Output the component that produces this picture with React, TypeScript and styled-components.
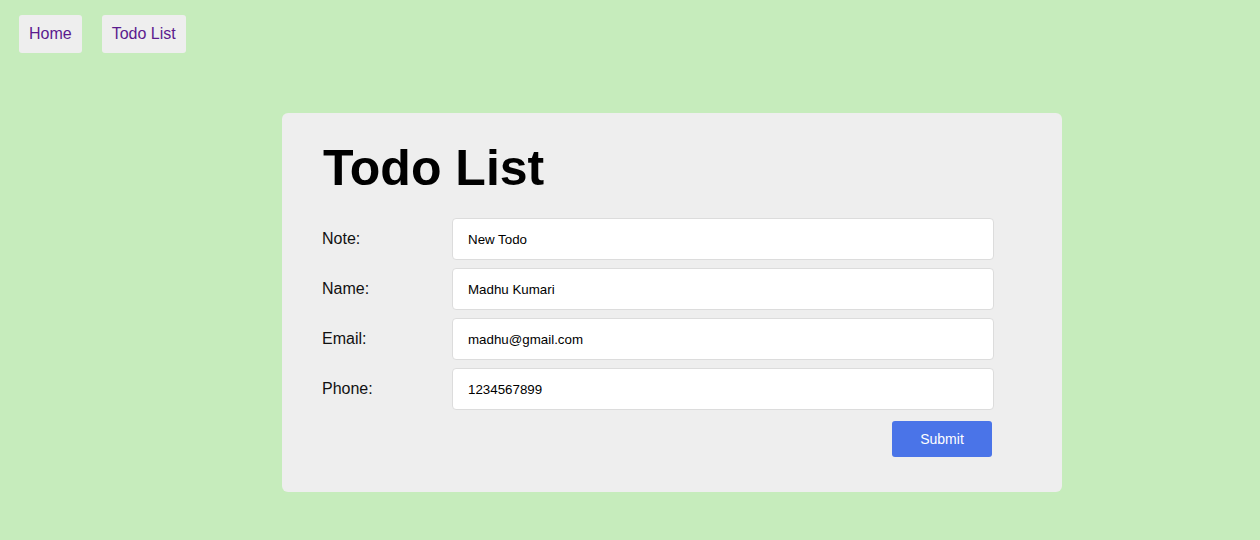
import React from "react";
import styled, { createGlobalStyle } from "styled-components";

const Global = createGlobalStyle`
  html, body { margin: 0; padding: 0; }
  body {
    background: #c6ecbc;
    font-family: "Liberation Sans", Arial, sans-serif;
    min-height: 540px;
  }
`;

const Page = styled.div`
  display: flex;
  flex-direction: column;
`;

const Nav = styled.nav`
  display: flex;
  gap: 20px;
  padding: 15px 19px 0;
`;

const NavLink = styled.a`
  display: block;
  background: #eeeeee;
  border-radius: 3px;
  padding: 10px 10px;
  font-size: 16px;
  line-height: 18px;
  color: #5b1a8e;
  text-decoration: none;
`;

const Card = styled.main`
  margin: 60px 0 0 282px;
  width: 780px;
  box-sizing: border-box;
  background: #eeeeee;
  border-radius: 6px;
  padding: 27px 68px 35px 40px;
`;

const Title = styled.h1`
  margin: 0 0 22px 1px;
  font-size: 50px;
  line-height: 56px;
  font-weight: 700;
  color: #000;
`;

const Form = styled.form`
  display: flex;
  flex-direction: column;
  gap: 8px;
`;

const Row = styled.div`
  display: grid;
  grid-template-columns: 130px 1fr;
  align-items: center;
`;

const Label = styled.label`
  font-size: 16px;
  color: #111;
  margin-top: -1px;
`;

const Input = styled.input`
  height: 42px;
  box-sizing: border-box;
  border: 1px solid #dcdcdc;
  border-radius: 4px;
  background: #fff;
  padding: 0 15px;
  font-family: "Liberation Sans", Arial, sans-serif;
  font-size: 13.33px;
  color: #000;
  outline: none;
`;

const Actions = styled.div`
  display: flex;
  justify-content: flex-end;
  padding-right: 2px;
  margin-top: 3px;
`;

const Submit = styled.button`
  width: 100px;
  height: 36px;
  border: none;
  border-radius: 3px;
  background: #4a74e8;
  color: #fff;
  font-family: "Liberation Sans", Arial, sans-serif;
  font-size: 14px;
  cursor: pointer;
`;

const fields = [
  { label: "Note:", value: "New Todo" },
  { label: "Name:", value: "Madhu Kumari" },
  { label: "Email:", value: "madhu@gmail.com" },
  { label: "Phone:", value: "1234567899" },
];

export default function App() {
  return (
    <Page>
      <Global />
      <Nav>
        <NavLink href="#">Home</NavLink>
        <NavLink href="#">Todo List</NavLink>
      </Nav>
      <Card>
        <Title>Todo List</Title>
        <Form onSubmit={(e) => e.preventDefault()}>
          {fields.map((f) => (
            <Row key={f.label}>
              <Label>{f.label}</Label>
              <Input defaultValue={f.value} />
            </Row>
          ))}
          <Actions>
            <Submit type="submit">Submit</Submit>
          </Actions>
        </Form>
      </Card>
    </Page>
  );
}
